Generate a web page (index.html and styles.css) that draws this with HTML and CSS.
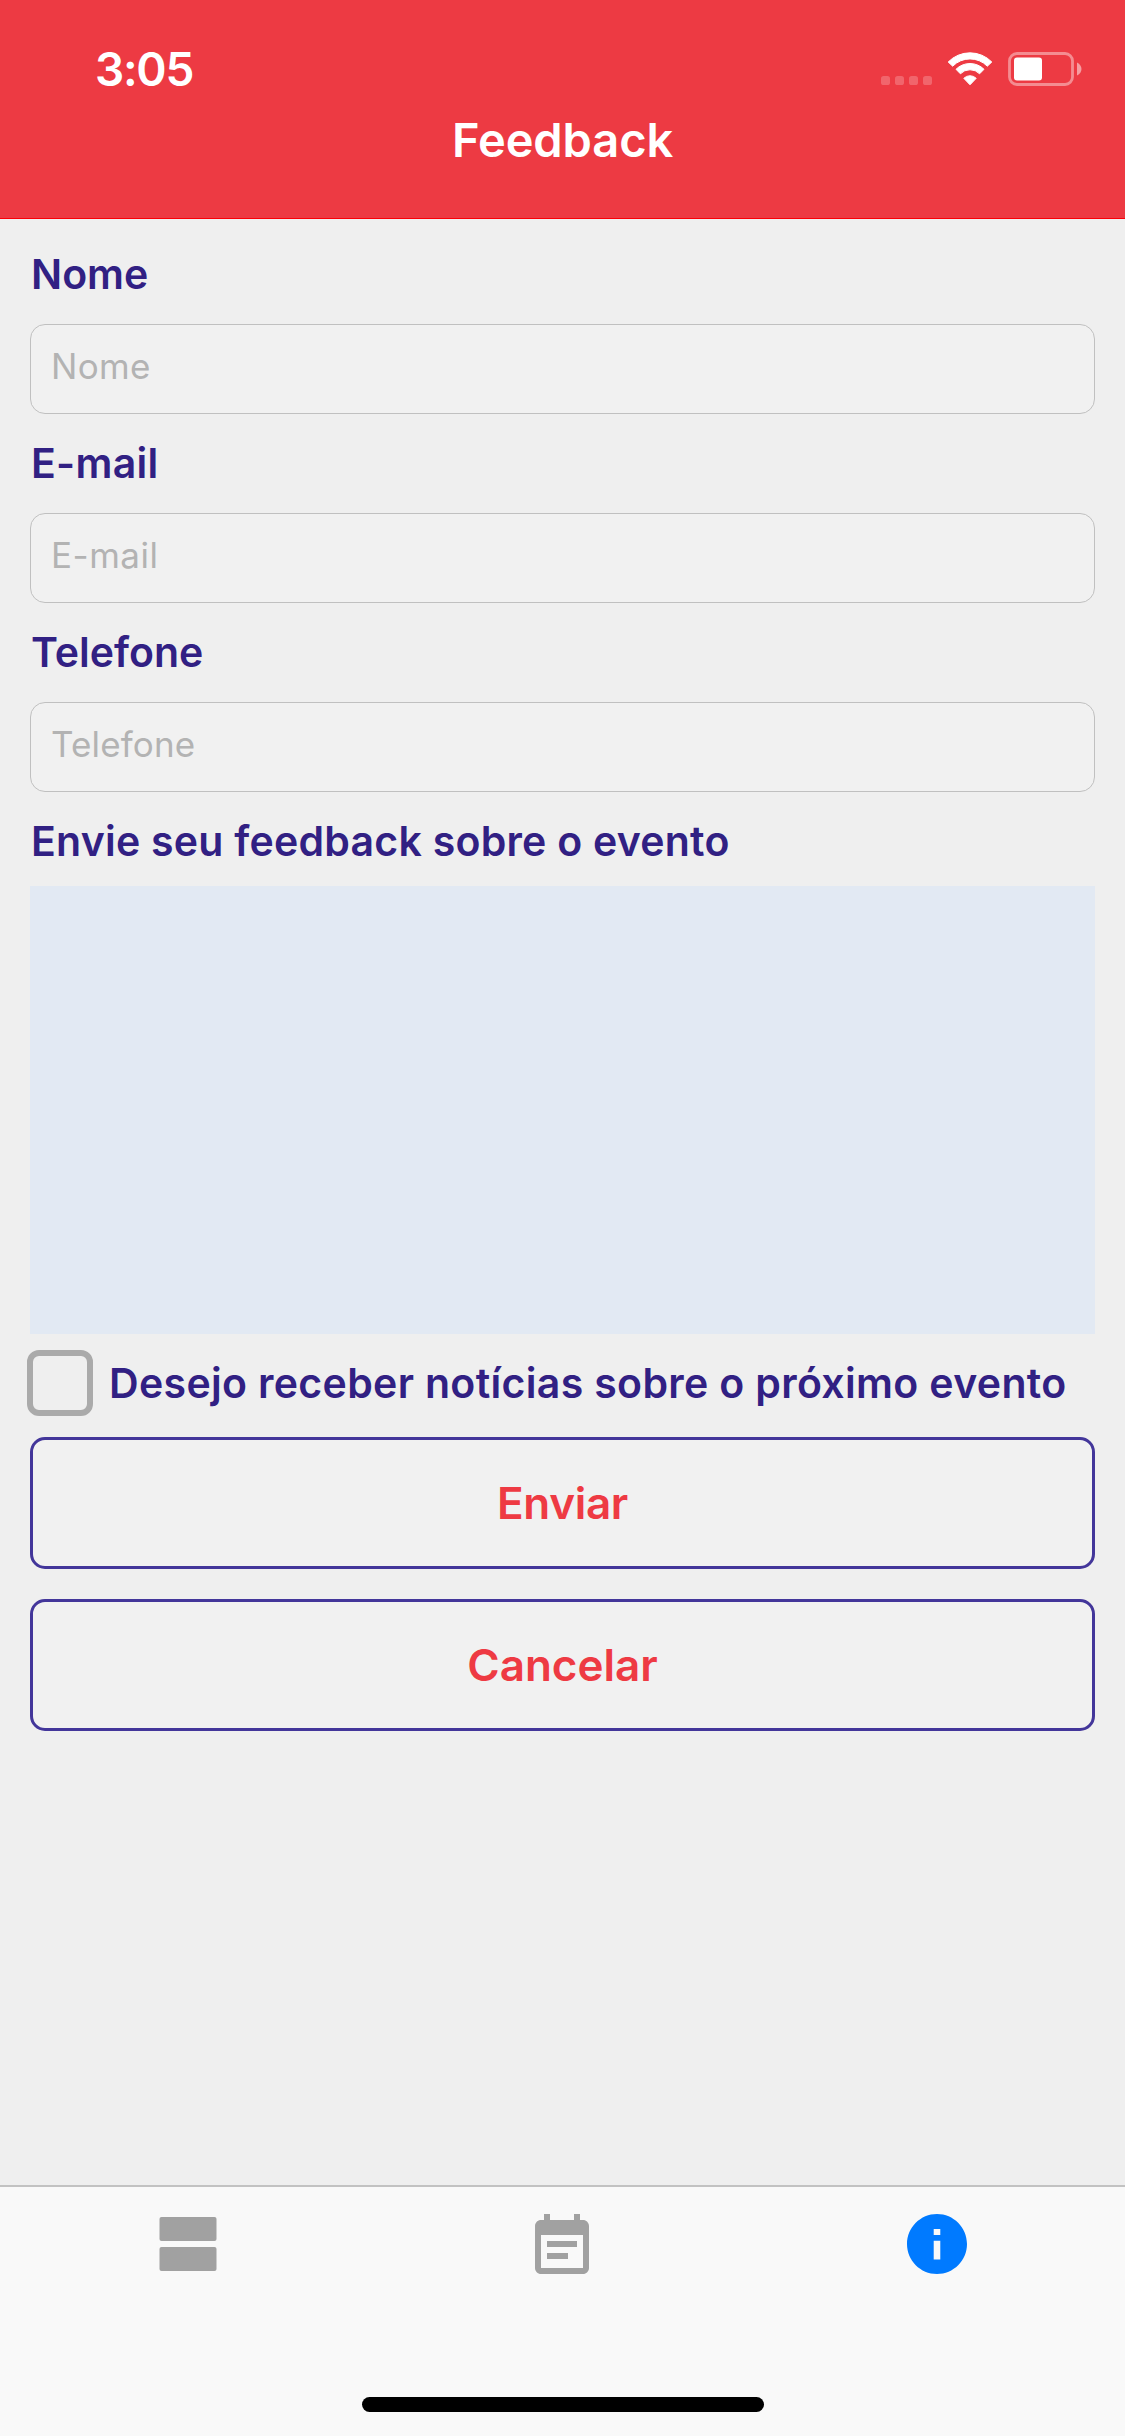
FILE: index.html
```
<!DOCTYPE html>
<html lang="pt-BR">
<head>
<meta charset="utf-8">
<title>Feedback</title>
<link rel="stylesheet" href="styles.css">
</head>
<body>
<div class="screen">
  <header class="header">
    <div class="status">
      <span class="clock">3:05</span>
      <svg class="status-icons" width="201" height="40" viewBox="0 0 201 40" aria-hidden="true">
        <g fill="#fff" fill-opacity=".22">
          <rect x="0" y="26" width="9" height="9" rx="2.6"/>
          <rect x="14" y="26" width="9" height="9" rx="2.6"/>
          <rect x="28" y="26" width="9" height="9" rx="2.6"/>
          <rect x="42" y="26" width="9" height="9" rx="2.6"/>
        </g>
        <g fill="#fff" stroke="#fff" stroke-width="1" stroke-linejoin="round">
          <path d="M67.2 12A30.5 30.5 0 0 1 110.8 12L106.3 16.2A24.2 24.2 0 0 0 71.7 16.2Z"/>
          <path d="M75 19.3A19.8 19.8 0 0 1 103 19.3L98.6 23.8A13.4 13.4 0 0 0 79.4 23.8Z"/>
          <path d="M82.8 28.3A8.8 8.8 0 0 1 95.2 28.3L89 34.8Z"/>
        </g>
        <rect x="128.5" y="3.5" width="63" height="31" rx="7.5" fill="none" stroke="#fff" stroke-opacity=".42" stroke-width="2.8"/>
        <rect x="133" y="7.5" width="28" height="23" rx="3" fill="#fff"/>
        <path d="M196 12.5C199 14 200.5 16.500 200.500 19S199 24 196 25.500Z" fill="#fff" fill-opacity=".5"/>
      </svg>
    </div>
    <h1 class="title">Feedback</h1>
  </header>

  <main class="form">
    <div class="field">
      <label class="label" for="nome">Nome</label>
      <input class="input" id="nome" type="text" placeholder="Nome">
    </div>
    <div class="field">
      <label class="label label-email" for="email">E-mail</label>
      <input class="input input-email" id="email" type="text" placeholder="E-mail">
    </div>
    <div class="field">
      <label class="label" for="telefone">Telefone</label>
      <input class="input input-phone" id="telefone" type="text" placeholder="Telefone">
    </div>
    <div class="message-field">
      <label class="label label-message" for="mensagem">Envie seu feedback sobre o evento</label>
      <textarea class="message" id="mensagem"></textarea>
    </div>
    <label class="consent">
      <input class="checkbox" type="checkbox">
      <span class="label label-consent">Desejo receber notícias sobre o próximo evento</span>
    </label>
    <div class="actions">
      <button class="button button-send" type="button">Enviar</button>
      <button class="button" type="button">Cancelar</button>
    </div>
  </main>

  <nav class="tabs">
    <a class="tab">
      <svg width="72" height="72" viewBox="0 0 72 72" fill="#a1a1a1"><rect x="7.500" y="6" width="57" height="24" rx="2"/><rect x="7.500" y="36" width="57" height="24" rx="2"/></svg>
    </a>
    <a class="tab">
      <svg width="72" height="72" viewBox="0 0 24 24" fill="#a1a1a1"><path d="M17 10H7v2h10v-2zm2-7h-1V1h-2v2H8V1H6v2H5c-1.110 0-1.990.9-1.990 2L3 19c0 1.100.89 2 2 2h14c1.100 0 2-.9 2-2V5c0-1.100-.9-2-2-2zm0 16H5V8h14v11zm-5-5H7v2h7v-2z"/></svg>
    </a>
    <a class="tab">
      <svg width="72" height="72" viewBox="0 0 24 24" fill="#007aff"><path d="M12 1C6.480 1 2 5.480 2 11s4.480 10 10 10 10-4.480 10-10S17.520 1 12 1zm1.100 15.200h-2.200V9.900h2.200v6.300zm0-8.200h-2.200V6h2.200v2z"/></svg>
    </a>
    <div class="home-indicator"></div>
  </nav>
</div>
</body>
</html>
```
FILE: styles.css
```
* {
  box-sizing: border-box;
}

body {
  margin: 0;
  font-family: Inter, "Liberation Sans", sans-serif;
}

.screen {
  display: flex;
  flex-direction: column;
  width: 1125px;
  height: 2436px;
  background: #efefef;
}

/* Header */
.header {
  height: 219px;
  padding-top: 41px;
  background: #ed3a43;
  border-bottom: 1px solid #fb0007;
  color: #fff;
}

.status {
  display: flex;
  justify-content: space-between;
  height: 56px;
  padding: 0 43px 0 95px;
}

.clock {
  font-size: 46px;
  font-weight: 600;
  line-height: 56px;
  letter-spacing: -1.3px;
}

.status-icons {
  margin-top: 9px;
}

.title {
  margin: 14px 0 0;
  font-size: 47px;
  font-weight: 600;
  line-height: 57px;
  letter-spacing: -0.1px;
  text-align: center;
}

/* Form */
.form {
  display: flex;
  flex: 1;
  flex-direction: column;
  padding: 30px 30px 0;
}

.field {
  display: flex;
  flex-direction: column;
  gap: 25px;
  margin-bottom: 24px;
}

.label {
  padding-left: 1px;
  color: #312083;
  font-size: 41px;
  font-weight: 600;
  line-height: 50px;
  white-space: nowrap;
}

.label-email {
  letter-spacing: 0.3px;
}

.label-message {
  letter-spacing: 0.25px;
}

.label-consent {
  letter-spacing: 0.34px;
}

.input {
  width: 100%;
  height: 90px;
  padding: 0 20px 6px;
  border: 1px solid #c0c0c0;
  border-radius: 15px;
  background: #f1f1f1;
  font-family: inherit;
  font-size: 35px;
  letter-spacing: 0.35px;
}

.input-email {
  letter-spacing: 0.5px;
}

.input-phone {
  letter-spacing: 0.15px;
}

.input::placeholder {
  color: #b3b3b3;
  opacity: 1;
}

.message-field {
  display: flex;
  flex-direction: column;
  gap: 20px;
}

.message {
  height: 448px;
  padding: 0;
  border: 0;
  border-radius: 0;
  background: #e2e9f3;
  resize: none;
}

.consent {
  display: flex;
  align-items: center;
  gap: 15px;
  margin: 16px 0 0 -3px;
}

.checkbox {
  flex: none;
  width: 66px;
  height: 66px;
  margin: 0;
  border: 6px solid #aaa;
  border-radius: 12px;
  appearance: none;
}

.actions {
  display: flex;
  flex-direction: column;
  gap: 30px;
  margin-top: 21px;
}

.button {
  height: 132px;
  padding: 0;
  border: 3px solid #43369a;
  border-radius: 15px;
  background: #f1f1f1;
  color: #ee3a43;
  font-family: inherit;
  font-size: 44px;
  font-weight: 600;
}

.button-send {
  letter-spacing: -0.3px;
}

/* Tab bar */
.tabs {
  position: relative;
  display: grid;
  grid-template-columns: repeat(3, 1fr);
  height: 251px;
  padding-top: 24px;
  border-top: 2px solid #c2c2c2;
  background: #f9f9f9;
}

.tab {
  display: flex;
  justify-content: center;
  align-items: flex-start;
}

.tab + .tab {
  padding-right: 1px;
}

.home-indicator {
  position: absolute;
  bottom: 24px;
  left: 50%;
  width: 402px;
  height: 15px;
  border-radius: 8px;
  background: #000;
  transform: translateX(-50%);
}
```
